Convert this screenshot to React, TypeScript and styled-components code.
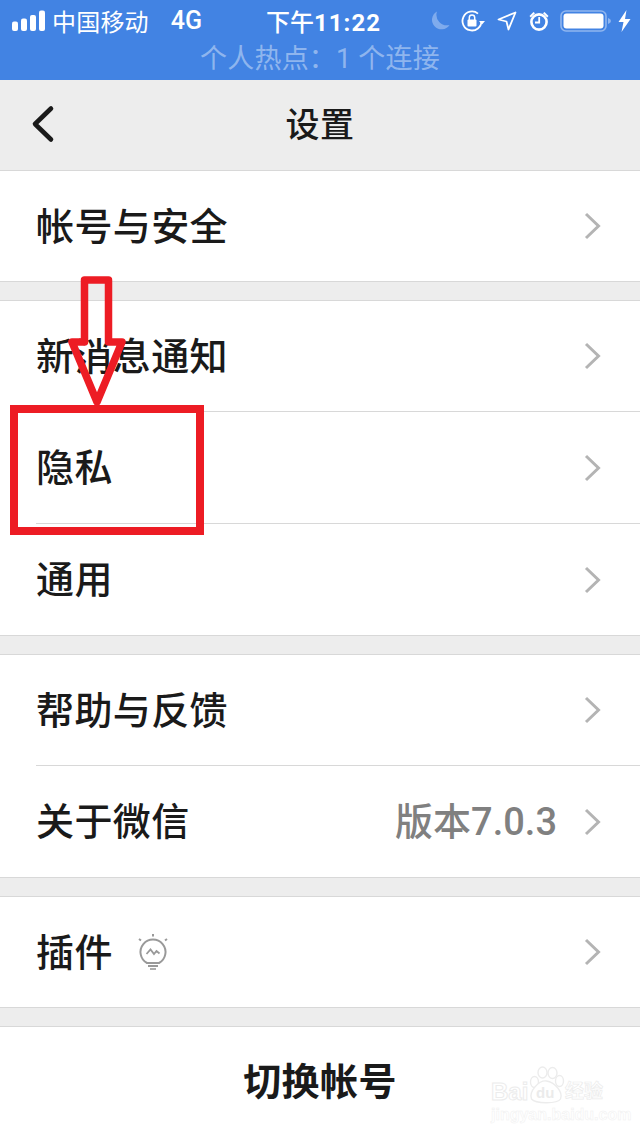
import React from "react";
import styled, { createGlobalStyle } from "styled-components";

const FONT = `Roboto, "Noto Sans CJK SC", sans-serif`;

const Global = createGlobalStyle`
  html, body { margin: 0; padding: 0; background: #ededed; }
  * { box-sizing: border-box; }
`;

const Page = styled.div`
  position: relative;
  width: 640px;
  height: 1136px;
  overflow: hidden;
  background: #ededed;
  font-family: ${FONT};
  color: #1a1a1a;
`;

const StatusArea = styled.header`
  height: 80px;
  background: #4283e3;
  color: #fff;
  display: flex;
  flex-direction: column;
`;

const StatusRow = styled.div`
  height: 41px;
  padding: 0 9px 0 12px;
  display: grid;
  grid-template-columns: 1fr auto 1fr;
  align-items: center;
`;

const StatusLeft = styled.div`
  display: flex;
  align-items: center;
  font-size: 24px;
`;

const Carrier = styled.span`
  margin-left: 6px;
  letter-spacing: 0.2px;
`;

const Network = styled.span`
  margin-left: 22px;
  font-size: 25px;
  font-weight: 500;
`;

const Clock = styled.div`
  font-size: 24px;
  font-weight: 500;
  margin-left: 4px;
`;

const ClockDigits = styled.span`
  font-weight: 700;
  letter-spacing: 1px;
`;

const StatusRight = styled.div`
  display: flex;
  align-items: center;
  justify-content: flex-end;
`;

const Hotspot = styled.div`
  height: 39px;
  text-align: center;
  font-size: 27px;
  letter-spacing: 0.2px;
  line-height: 36px;
  color: rgba(255, 255, 255, 0.42);
`;

const NavBar = styled.nav`
  position: relative;
  height: 90px;
  padding-bottom: 6px;
  display: flex;
  align-items: center;
  justify-content: center;
  font-size: 34px;
  font-weight: 500;
  letter-spacing: 0.5px;
  color: #1a1a1a;
`;

const BackIcon = styled.svg`
  position: absolute;
  left: 30px;
  top: 25px;
`;

const Group = styled.section`
  background: #fff;
  border-top: 1px solid #d8d8d8;
  border-bottom: 1px solid #d8d8d8;
  margin-bottom: 18px;
`;

const Row = styled.div`
  height: 111px;
  padding-left: 36px;
  &:only-child { height: 110px; }
  &:not(:first-child):not(:last-child) { height: 112px; }
`;

const RowInner = styled.div<{ $divider: boolean }>`
  height: 100%;
  display: flex;
  align-items: center;
  padding-right: 39px;
  ${(p) => (p.$divider ? "border-bottom: 1px solid #d8d8d8;" : "")}
`;

const Label = styled.span`
  font-size: 38px;
  font-weight: 500;
  letter-spacing: 0.4px;
  margin-bottom: 6px;
  color: #1a1a1a;
`;

const Detail = styled.span`
  margin-left: auto;
  margin-right: 27px;
  margin-bottom: 6px;
  font-size: 38px;
  font-weight: 500;
  color: #808080;
`;

const Chevron = styled.svg<{ $auto: boolean }>`
  flex: none;
  ${(p) => (p.$auto ? "margin-left: auto;" : "")}
`;

const Bulb = styled.svg`
  margin-left: 24px;
  flex: none;
`;

const SwitchRow = styled.div`
  height: 110px;
  padding-bottom: 8px;
  display: flex;
  align-items: center;
  justify-content: center;
  font-size: 38px;
  font-weight: 700;
  letter-spacing: 0.4px;
  color: #1a1a1a;
`;

const Highlight = styled.div`
  position: absolute;
  left: 10px;
  top: 405px;
  width: 194px;
  height: 130px;
  border: 8px solid #ed1c24;
`;

const Arrow = styled.svg`
  position: absolute;
  left: 66px;
  top: 272px;
`;

const Watermark = styled.div`
  position: absolute;
  left: 491px;
  top: 1066px;
  width: 118px;
  color: #fff;
  font-family: "Liberation Sans", "Noto Sans CJK SC", sans-serif;
`;

const MarkTop = styled.div`
  display: flex;
  align-items: flex-end;
  height: 38px;
  white-space: nowrap;
`;

const MarkBai = styled.span`
  width: 37px;
  flex: none;
  font-size: 24px;
  font-weight: 700;
  line-height: 24px;
  -webkit-text-stroke: 1px #ececec;
`;

const MarkPawBox = styled.div`
  position: relative;
  width: 37px;
  height: 38px;
  flex: none;
`;

const MarkDu = styled.span`
  position: absolute;
  left: 8px;
  bottom: 4px;
  font-size: 15px;
  line-height: 15px;
  font-weight: 700;
  color: #ebebeb;
`;

const MarkCn = styled.span`
  flex: none;
  font-size: 19px;
  line-height: 24px;
  font-weight: 700;
  -webkit-text-stroke: 0.7px #ececec;
`;

const MarkUrl = styled.div`
  font-size: 16px;
  font-weight: 700;
  line-height: 16px;
  margin-top: 3px;
  white-space: nowrap;
  -webkit-text-stroke: 0.5px #f0f0f0;
`;

const StatusSvg = styled.svg<{ $gap?: number }>`
  flex: none;
  margin-left: ${(p) => p.$gap ?? 0}px;
`;

const Signal = () => (
  <StatusSvg width="34" height="22" viewBox="0 0 34 22">
    <rect x="0" y="11.5" width="6" height="9.5" rx="2" fill="#fff" />
    <rect x="9" y="8.5" width="6" height="12.5" rx="2" fill="#fff" />
    <rect x="18" y="5" width="6" height="16" rx="2" fill="#fff" />
    <rect x="27" y="0.5" width="6" height="20.5" rx="2" fill="#fff" />
  </StatusSvg>
);

const ChevronIcon = ({ auto }: { auto: boolean }) => (
  <Chevron $auto={auto} width="17" height="28" viewBox="0 0 17 28">
    <path d="M2 2 L14.5 14 L2 26" fill="none" stroke="#b4b4b4" strokeWidth="3" />
  </Chevron>
);

type Item = { label: string; detail?: string; bulb?: boolean };

const GROUPS: Item[][] = [
  [{ label: "帐号与安全" }],
  [{ label: "新消息通知" }, { label: "隐私" }, { label: "通用" }],
  [{ label: "帮助与反馈" }, { label: "关于微信", detail: "版本7.0.3" }],
  [{ label: "插件", bulb: true }],
];

export default function App() {
  return (
    <Page>
      <Global />
      <StatusArea>
        <StatusRow>
          <StatusLeft>
            <Signal />
            <Carrier>中国移动</Carrier>
            <Network>4G</Network>
          </StatusLeft>
          <Clock>
            下午<ClockDigits>11:22</ClockDigits>
          </Clock>
          <StatusRight>
            <StatusSvg width="20" height="20" viewBox="0 0 20 20">
              <path d="M7 0.5 A9.5 9.5 0 1 0 19.5 14 A10.5 10.5 0 0 1 7 0.5 Z" fill="#7fabed" />
            </StatusSvg>
            <StatusSvg $gap={11} width="24" height="22" viewBox="0 0 24 22">
              <path d="M20.5 11 A9.5 9.5 0 1 1 17 3.6" fill="none" stroke="#fff" strokeWidth="1.8" />
              <path d="M18 11 L24 11 L21 14.5 Z" fill="#fff" />
              <rect x="6.5" y="9.5" width="9" height="7" rx="1" fill="#fff" />
              <path d="M8.3 10 V7.6 A2.7 2.7 0 0 1 13.7 7.6 V10" fill="none" stroke="#fff" strokeWidth="1.5" />
            </StatusSvg>
            <StatusSvg $gap={12} width="20" height="20" viewBox="0 0 20 20">
              <path d="M18.5 1.5 L11.5 18.5 L9.5 10.5 L1.5 8.5 Z" fill="none" stroke="#fff" strokeWidth="1.8" strokeLinejoin="round" />
            </StatusSvg>
            <StatusSvg $gap={12} width="20" height="20" viewBox="0 0 20 20">
              <circle cx="10" cy="11" r="7.6" fill="none" stroke="#fff" strokeWidth="2.6" />
              <path d="M10.2 6 V11.5 H6" fill="none" stroke="#fff" strokeWidth="1.8" />
              <path d="M0.5 5 L4.5 1 L6 2.2 L1.8 6.4 Z M19.5 5 L15.5 1 L14 2.2 L18.2 6.4 Z" fill="#fff" />
            </StatusSvg>
            <StatusSvg $gap={11} width="51" height="22" viewBox="0 0 51 22">
              <rect x="1" y="1" width="45" height="20" rx="5" fill="none" stroke="#90b6ef" strokeWidth="1.6" />
              <rect x="3.5" y="3.5" width="40" height="15" rx="3" fill="#fff" />
              <path d="M48 8 Q51 9 51 11 Q51 13 48 14 Z" fill="#90b6ef" />
            </StatusSvg>
            <StatusSvg $gap={7} width="13" height="22" viewBox="0 0 13 22">
              <path d="M8.5 0 L0.5 12 H5.5 L3.5 22 L12.5 9 H7 Z" fill="#fff" />
            </StatusSvg>
          </StatusRight>
        </StatusRow>
        <Hotspot>个人热点：1 个连接</Hotspot>
      </StatusArea>

      <NavBar>
        <BackIcon width="26" height="40" viewBox="0 0 26 40">
          <path d="M21 3.5 L5 19 L21 34.5" fill="none" stroke="#1a1a1a" strokeWidth="4.6" strokeLinecap="round" strokeLinejoin="round" />
        </BackIcon>
        设置
      </NavBar>

      {GROUPS.map((items, g) => (
        <Group key={g}>
          {items.map((item, i) => (
            <Row key={item.label}>
              <RowInner $divider={i < items.length - 1}>
                <Label>{item.label}</Label>
                {item.bulb && (
                  <Bulb width="32" height="36" viewBox="0 0 32 36">
                    <g fill="none" stroke="#999" strokeWidth="2">
                      <path d="M10 29 A12.5 12.5 0 1 1 22 29 Z" />
                      <path d="M11 32 H21" />
                      <path d="M13 35 H19" strokeWidth="1.6" />
                      <path d="M9.5 20 L13.5 15.5 L17 20 L19.5 17 L22.5 19.5" strokeWidth="1.8" />
                      <path d="M16 0 V2.5 M2 5 L4 6.5 M30 5 L28 6.5" />
                    </g>
                  </Bulb>
                )}
                {item.detail && <Detail>{item.detail}</Detail>}
                <ChevronIcon auto={!item.detail} />
              </RowInner>
            </Row>
          ))}
        </Group>
      ))}

      <Group>
        <SwitchRow>切换帐号</SwitchRow>
      </Group>

      <Arrow width="64" height="140" viewBox="0 0 64 140">
        <path
          d="M18.5 8 H42.5 V70 H56 L31 130 L6 70 H18.5 Z"
          fill="none"
          stroke="#ed1c24"
          strokeWidth="7.5"
          strokeLinejoin="round"
        />
      </Arrow>
      <Highlight />

      <Watermark>
        <MarkTop>
          <MarkBai>Bai</MarkBai>
          <MarkPawBox>
            <svg width="37" height="38" viewBox="0 0 36 38">
              <g fill="#fff" stroke="#ececec" strokeWidth="1.4">
                <ellipse cx="6" cy="16" rx="4" ry="5.5" />
                <ellipse cx="14" cy="6.5" rx="4.5" ry="5.5" />
                <ellipse cx="24" cy="7" rx="4.5" ry="5.5" />
                <ellipse cx="31" cy="15" rx="4" ry="5.5" />
                <path d="M3 33 C0 25 11 14 18 15 C26 16 35 26 32 33 C29 38 7 38 3 33 Z" />
              </g>
            </svg>
            <MarkDu>du</MarkDu>
          </MarkPawBox>
          <MarkCn>经验</MarkCn>
        </MarkTop>
        <MarkUrl>jingyan.baidu.com</MarkUrl>
      </Watermark>
    </Page>
  );
}
